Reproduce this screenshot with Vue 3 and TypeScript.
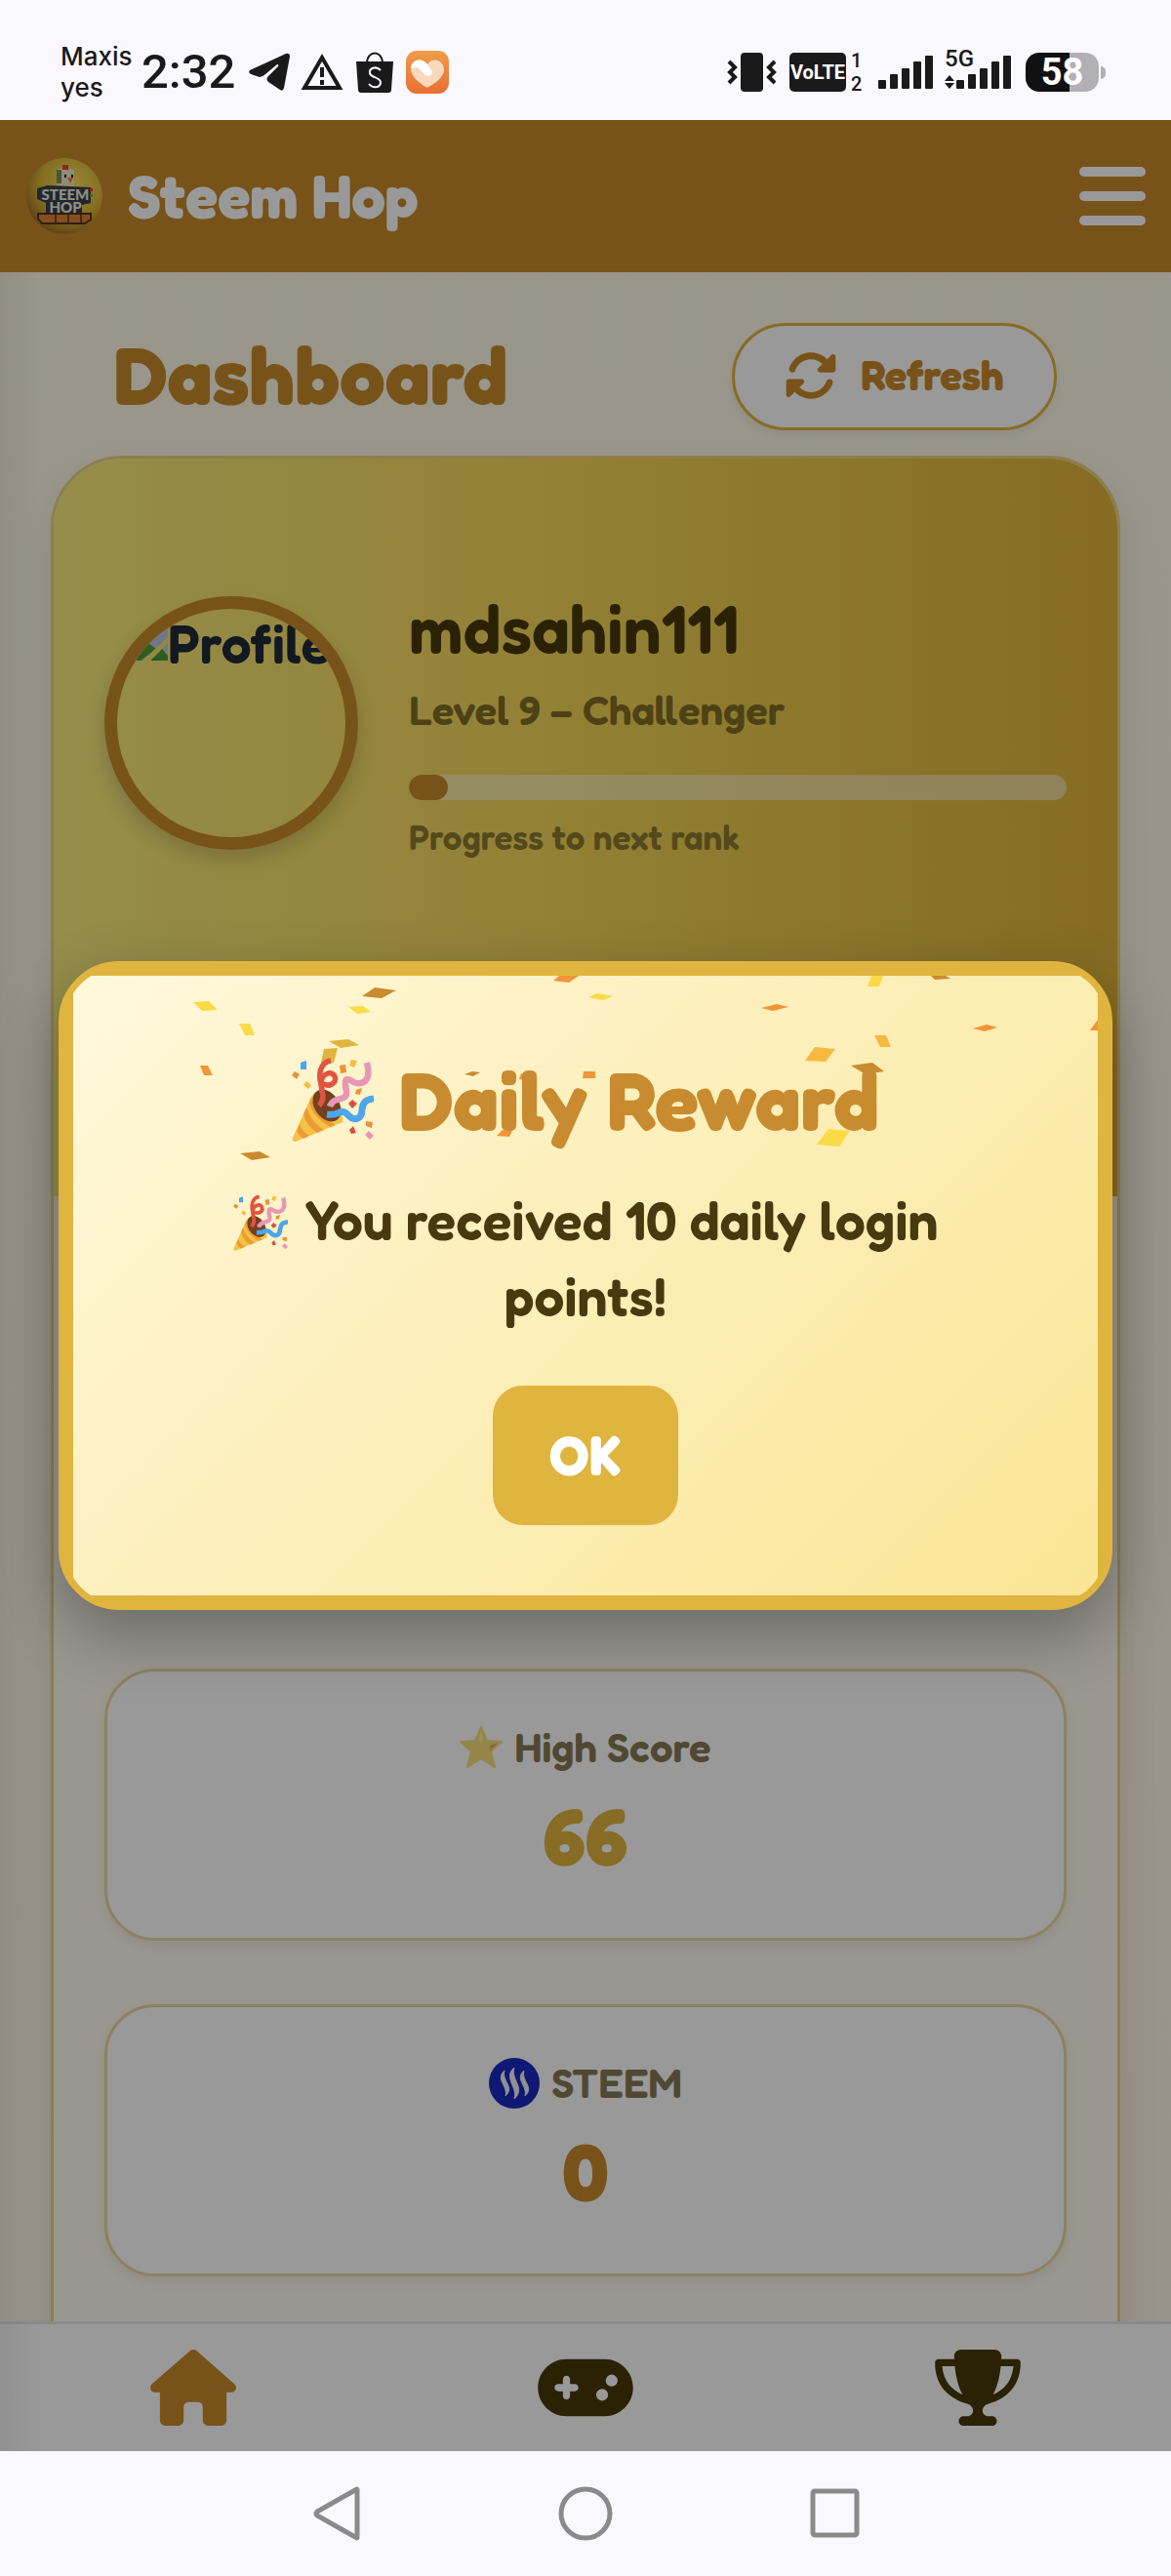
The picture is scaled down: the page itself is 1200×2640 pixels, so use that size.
<script setup lang="ts">
import { ref } from 'vue'

interface Confetto { points: string; fill: string }

const yellow = '#fadb45'
const orange = '#f29537'
const bronze = '#c88b2f'
const gold = '#e0b53f'
const amber = '#f4b93e'

const confetti: Confetto[] = [
  { points: '123,27 139,26 148,35 132,36', fill: yellow },
  { points: '170,49 181,49 186,61 176,61', fill: yellow },
  { points: '296,21 309,12 331,15 316,23', fill: bronze },
  { points: '282,32 297,31 305,37 291,39', fill: yellow },
  { points: '262,67 282,65 293,71 274,74', fill: gold },
  { points: '257,75 271,74 267,89 254,89', fill: gold },
  { points: '130,92 138,92 143,102 134,102', fill: orange },
  { points: '171,182 191,180 202,186 183,189', fill: bronze },
  { points: '401,101 409,98 417,99 410,103', fill: bronze },
  { points: '492,5 498,0 518,0 508,7', fill: orange },
  { points: '528,22 537,18 553,21 543,25', fill: yellow },
  { points: '523,98 535,98 535,105 522,105', fill: orange },
  { points: '434,164 440,158 450,159 447,165', fill: orange },
  { points: '459,100 466,101 464,107 457,106', fill: orange },
  { points: '818,0 830,0 826,11 814,11', fill: yellow },
  { points: '879,0 894,0 899,3 883,4', fill: bronze },
  { points: '705,33 721,29 733,32 717,36', fill: orange },
  { points: '922,54 936,50 947,53 934,57', fill: orange },
  { points: '1042,56 1050,45 1050,56', fill: orange },
  { points: '760,73 781,75 771,88 750,87', fill: amber },
  { points: '821,61 833,61 838,73 827,73', fill: amber },
  { points: '797,92 819,89 831,98 812,101', fill: bronze },
  { points: '774,157 796,159 785,175 762,173', fill: yellow },
]

const bars = [9, 15, 21, 28, 34]
const progress = ref(6)
const rewardOpen = ref(true)
</script>

<template>
  <div class="screen">
    <svg class="defs" aria-hidden="true">
      <symbol id="popper" viewBox="0 0 84 86">
        <path d="M20 40C24 34 29 33 34 34C46 40 53 52 52 66L4 86Q0 86 1 82Z" fill="#f5c344" />
        <path d="M15 51Q20 66 33 74L26 77Q15 70 12 58ZM8 68Q11 76 18 80L12 83Q7 80 5 75ZM20 40Q24 58 45 69L40 71Q22 62 18 46Z" fill="#ee9a36" />
        <ellipse cx="36" cy="49" rx="12.500" ry="18" transform="rotate(-35 36 49)" fill="#74401f" />
        <path d="M28 49Q34 43 31 34L30 25" fill="none" stroke="#b23a2c" stroke-width="5" />
        <path d="M28 49Q34 43 31 34L30 27C27 17 29 5 40 3M31 26C38 31 47 26 44 19C41 13 32 16 30 24" fill="none" stroke="#e05440" stroke-width="5.500" />
        <path d="M39 50C43 38 58 46 56 34C54 25 54 20 60 23C68 29 83 28 77 5" fill="none" stroke="#e797b5" stroke-width="6.500" />
        <path d="M36 58C50 60 49 51 57 58C64 66 72 63 72 53C73 46 75 43 84 42" fill="none" stroke="#4ba6ea" stroke-width="7" />
        <path d="M9 5L15 3L15 12L9 12Z" fill="#4ba6ea" />
        <path d="M3 14L8 17L5 22L0 18ZM49 8L55 7L56 15L50 16ZM66 33L72 31L70 38L65 37ZM76 65L83 66L82 72L76 70Z" fill="#e79337" />
        <path d="M15 24L20 28L17 32L12 28ZM61 2L67 3L64 10L59 8Z" fill="#f0c040" />
        <path d="M62 43L67 47L62 52L58 47ZM63 70L66 77L61 78L59 74Z" fill="#d94f43" />
        <path d="M79 75L84 80L80 84L75 79Z" fill="#e797b5" />
      </symbol>
    </svg>

    <div class="status">
      <div class="status-left">
        <div class="carrier">Maxis<br />yes</div>
        <div class="clock">2:32</div>
        <svg width="44" height="40" viewBox="0 0 44 40"><path d="M2 18Q0 20 3 22L12 25Q15 25 18 22L30 12Q32 12 31 14L21 24Q18 27 21 30L33 38Q36 40 37 36L43 4Q43 0 39 1Z" fill="#1a1a1a" /></svg>
        <svg width="44" height="40" viewBox="0 0 44 40"><path d="M22 5L40 36H4Z" fill="none" stroke="#1a1a1a" stroke-width="4" /><path d="M22 15V25M22 28V33" stroke="#1a1a1a" stroke-width="4" /></svg>
        <svg class="bag" width="38" height="42" viewBox="0 0 38 42"><path d="M11 12C11 -2 27 -2 27 12" fill="none" stroke="#1a1a1a" stroke-width="2" /><path d="M0 10H38L36 39Q36 42 33 42H5Q2 42 2 39Z" fill="#1a1a1a" /><path d="M25 19C20 14 13 17 14 22C15 27 26 26 25 32C24 38 16 37 13 33" fill="none" stroke="#faf8ff" stroke-width="2" /></svg>
        <svg class="heart" width="44" height="44" viewBox="0 0 44 44"><defs><linearGradient id="ho" x2="0" y2="1"><stop stop-color="#f09c49" /><stop offset="1" stop-color="#e86f32" /></linearGradient></defs><rect width="44" height="44" rx="11" fill="url(#ho)" /><path d="M22 14C27 6 39 9 39 20C38 28 29 34 23 37Q22 38 20 37C14 33 5 27 5 18C6 8 17 7 22 14Z" fill="#f9d9bd" /><path d="M5 18C6 8 17 7 22 14L27 21Q26 28 20 25L12 17Z" fill="#fff" /></svg>
      </div>
      <div class="status-right">
        <svg width="51" height="40" viewBox="0 0 51 40"><rect x="14" y="0" width="23" height="40" rx="4" fill="#1a1a1a" /><path d="M2 9L8 15L3 20L8 25L2 31M49 9L43 15L48 20L43 25L49 31" fill="none" stroke="#1a1a1a" stroke-width="4" /></svg>
        <div class="volte">VoLTE</div>
        <div class="sims"><span>1</span><span>2</span></div>
        <div class="bars"><i v-for="h in bars" :key="h" :style="{ height: h + 'px' }"></i></div>
        <div class="data">
          <span class="five">5G</span>
          <svg class="arrows" width="10" height="14" viewBox="0 0 10 14"><path d="M5 0L10 6H0ZM0 8H10L5 14Z" fill="#1a1a1a" /></svg>
          <div class="bars"><i v-for="h in bars" :key="h" :style="{ height: h + 'px' }"></i></div>
        </div>
        <div class="battery"><span>58</span></div>
      </div>
    </div>

    <div class="app">
      <header class="topbar">
        <svg width="78" height="78" viewBox="0 0 78 78">
          <defs>
            <radialGradient id="lg" cx=".6" cy=".35" r=".7"><stop stop-color="#ffe45c" /><stop offset=".6" stop-color="#dcb83a" /><stop offset="1" stop-color="#a06a25" /></radialGradient>
          </defs>
          <circle cx="39" cy="39" r="39" fill="url(#lg)" />
          <path d="M11 31L22 28L66 30V46L57 48V60H20V46L11 42Z" fill="#39424a" />
          <rect x="31" y="11" width="18" height="17" rx="2" fill="#f1e8c8" /><path d="M31 12H36V26H31Z" fill="#6f9257" />
          <path d="M37 7H43V12H37Z" fill="#d9482f" /><path d="M42 20H48L45 26Z" fill="#ee8429" />
          <path d="M39 17h2v3h-2zM46 17h2v3h-2z" fill="#222" />
          <path d="M12 57H66V63L60 67H16L12 62Z" fill="#dd8438" stroke="#5a3215" stroke-width="2" /><path d="M30 58V66M43 58V66M56 58V66" stroke="#7b431b" stroke-width="2" />
          <text x="40" y="43" text-anchor="middle" class="logo-text">STEEM</text>
          <text x="40" y="56" text-anchor="middle" class="logo-text">HOP</text>
          <path d="M65 31h3v3h-3z" fill="#d33" /><path d="M65 37h3v3h-3z" fill="#5a3" />
        </svg>
        <span class="brand">Steem Hop</span>
        <button class="menu" aria-label="Menu"><i></i><i></i><i></i></button>
      </header>

      <main class="content">
        <div class="heading">
          <h1>Dashboard</h1>
          <button class="refresh">
            <svg width="54" height="54" viewBox="0 0 512 512" fill="currentColor"><path d="M142.900 142.900c62.200-62.200 162.700-62.500 225.300-1L327 183c-6.900 6.900-8.900 17.200-5.200 26.200s12.500 14.800 22.200 14.800H472c13.300 0 24-10.700 24-24V72c0-9.700-5.800-18.500-14.800-22.200s-19.300-1.700-26.200 5.200L413.400 96.600c-87.600-86.500-228.700-86.200-315.800 1C73.200 122 55.600 150.700 44.800 181.400c-5.900 16.700 2.900 34.900 19.500 40.800s34.900-2.900 40.800-19.500c7.700-21.800 20.200-42.300 37.800-59.800zM16 312V440c0 9.700 5.800 18.500 14.800 22.200s19.300 1.700 26.200-5.200l41.600-41.600c87.600 86.500 228.700 86.200 315.800-1c24.400-24.400 42.100-53.100 52.900-83.700c5.900-16.700-2.900-34.900-19.500-40.800s-34.900 2.900-40.800 19.500c-7.700 21.800-20.200 42.300-37.800 59.800c-62.200 62.200-162.700 62.500-225.300 1L185 329c6.900-6.900 8.900-17.200 5.200-26.200s-12.500-14.800-22.200-14.800H40c-13.300 0-24 10.700-24 24z" /></svg>
            Refresh
          </button>
        </div>

        <section class="card">
          <div class="hero">
            <div class="avatar" role="img" aria-label="Profile">
              <svg width="32" height="32" viewBox="0 0 32 32"><path d="M0 0H32V32H0Z" fill="#b9c8e4" /><path d="M0 28L12 14L20 20L4 32H0Z" fill="#4c9a35" /><path d="M14 32L26 20L32 27V32Z" fill="#4c9a35" /><path d="M6 32L32 8V14L14 32Z" fill="#f6e577" /></svg>
              <span>Profile</span>
            </div>
            <div class="who">
              <div class="name">mdsahin111</div>
              <div class="level">Level 9 – Challenger</div>
              <div class="track" role="progressbar" :aria-valuenow="progress"><div class="fill" :style="{ width: progress + '%' }"></div></div>
              <div class="hint">Progress to next rank</div>
            </div>
          </div>
          <div class="stats">
            <article class="stat">
              <div class="label">
                <svg width="44" height="44" viewBox="0 0 44 44"><path d="M22 1L28 15L43 16L32 26L36 42L22 33L8 42L12 26L1 16L16 15Z" fill="#f7e07a" stroke="#f7e07a" stroke-width="2" stroke-linejoin="round" /><path d="M31 20L40 17L31 25Z" fill="#dfb45c" /><path d="M22 4L24 16L20 15Z" fill="#fff3ac" /></svg>
                High Score
              </div>
              <div class="value">66</div>
            </article>
            <article class="stat">
              <div class="label">
                <svg width="52" height="52" viewBox="0 0 52 52"><circle cx="26" cy="26" r="26" fill="#1a28c0" /><path d="M16 13C6 22 20 29 17 39C27 30 13 24 16 13ZM26 10C14 20 30 30 26 42C38 31 22 22 26 10ZM36 13C26 22 40 29 37 39C47 30 33 24 36 13Z" fill="#f2f2f2" stroke="#f2f2f2" stroke-width="1" /></svg>
                STEEM
              </div>
              <div class="value bronze">0</div>
            </article>
          </div>
        </section>
      </main>

      <nav class="tabs">
        <a href="#home" aria-label="Home" class="active"><svg width="88" height="78" viewBox="0 0 576 512" fill="currentColor"><path d="M575.800 255.500c0 18-15 32.100-32 32.100h-32l.7 160.200V472c0 22.100-17.900 40-40 40H392c-22.100 0-40-17.900-40-40V384c0-17.700-14.300-32-32-32H256c-17.700 0-32 14.300-32 32v88c0 22.100-17.900 40-40 40H104c-22.100 0-40-17.900-40-40V287.600H32c-18 0-32-14-32-32.100c0-9 3-17 10-24L266.400 8c7-7 15-8 22-8s15 2 21 7L564.800 231.500c8 7 12 15 11 24z" /></svg></a>
        <a href="#play" aria-label="Play"><svg width="98" height="78" viewBox="0 0 640 512" fill="currentColor"><path fill-rule="evenodd" d="M192 64C86 64 0 150 0 256S86 448 192 448H448c106 0 192-86 192-192s-86-192-192-192H192zM496 168a40 40 0 1 1 0 80 40 40 0 1 1 0-80zM392 304a40 40 0 1 1 80 0 40 40 0 1 1 -80 0zM168 200c0-13.300 10.700-24 24-24s24 10.700 24 24v32h32c13.300 0 24 10.700 24 24s-10.700 24-24 24H216v32c0 13.300-10.700 24-24 24s-24-10.700-24-24V280H136c-13.300 0-24-10.700-24-24s10.700-24 24-24h32V200z" /></svg></a>
        <a href="#ranks" aria-label="Leaderboard"><svg width="88" height="78" viewBox="0 0 576 512" fill="currentColor"><path fill-rule="evenodd" d="M400 0H176c-26.500 0-48.100 21.800-47.100 48.200c.2 5.300 .4 10.600 .7 15.800H24C10.700 64 0 74.700 0 88c0 92.600 33.500 157 78.500 200.700c44.300 43.100 98.300 64.800 138.100 75.800c23.400 6.500 39.400 26 39.400 45.600c0 20.900-17 37.900-37.900 37.900H192c-17.700 0-32 14.300-32 32s14.300 32 32 32H384c17.700 0 32-14.300 32-32s-14.300-32-32-32H357.900C337 448 320 431 320 410.100c0-19.600 15.900-39.200 39.400-45.600c39.900-11 93.900-32.700 138.200-75.800C542.500 245 576 180.600 576 88c0-13.300-10.700-24-24-24H446.400c.3-5.200 .5-10.400 .7-15.800C448.100 21.800 426.500 0 400 0zM48.900 112h84.400c9.100 90.100 29.200 150.300 51.900 190.600c-24.900-11-50.800-26.500-73.200-48.300c-32-31.100-58-76-63-142.300zM464.100 254.300c-22.400 21.800-48.300 37.300-73.200 48.300c22.700-40.300 42.800-100.500 51.900-190.600h84.400c-5.100 66.300-31.100 111.200-63 142.300z" /></svg></a>
      </nav>

      <div class="drawer-shade"></div>

      <div v-if="rewardOpen" class="overlay">
        <section class="modal" role="dialog" aria-modal="true" aria-labelledby="reward-title">
          <div class="sheet">
            <svg class="confetti" viewBox="0 0 1050 635" preserveAspectRatio="xMidYMin meet" aria-hidden="true">
              <polygon v-for="(c, i) in confetti" :key="i" :points="c.points" :fill="c.fill" />
            </svg>
            <h2 id="reward-title"><svg class="pop-lg"><use href="#popper" /></svg>Daily Reward</h2>
            <p><svg class="pop-sm"><use href="#popper" /></svg>You received 10 daily login points!</p>
            <button class="ok" @click="rewardOpen = false">OK</button>
          </div>
        </section>
      </div>
    </div>

    <div class="system">
      <button aria-label="Back"><svg width="56" height="56" viewBox="0 0 56 56"><path d="M50 4V52Q50 54 48 52L9 30Q7 28 9 26L48 4Q50 2 50 4Z" /></svg></button>
      <button aria-label="Home screen"><svg width="56" height="56" viewBox="0 0 56 56"><circle cx="28" cy="28" r="25" /></svg></button>
      <button aria-label="Recent apps"><svg width="56" height="56" viewBox="0 0 56 56"><rect x="5" y="5" width="45" height="45" rx="2" /></svg></button>
    </div>
  </div>
</template>

<style>
body { margin: 0; }
</style>

<style scoped>
* { box-sizing: border-box; }
.screen { display: flex; flex-direction: column; height: 100vh; overflow: hidden; font-family: Fredoka, Lato, sans-serif; font-weight: 700; }
svg { display: block; flex: none; }
.defs { position: absolute; width: 0; height: 0; }
button { border: 0; padding: 0; background: none; font: inherit; }
h1, h2, p { margin: 0; font-weight: 700; }

.status { flex: none; height: 123px; padding: 24px 67px 0 62px; background: #faf8ff; color: #1a1a1a; display: flex; justify-content: space-between; align-items: center; font-family: Roboto, sans-serif; font-weight: 500; }
.status-left, .status-right { display: flex; align-items: center; }
.carrier { width: 83px; font: 500 26px/32px Inter, sans-serif; }
.clock { width: 109px; font-size: 49px; line-height: 56px; }
.status-left svg { margin-right: 10px; }
.status-left .bag { margin: 0 13px 0 3px; }
.volte { width: 58px; height: 40px; margin-left: 13px; border-radius: 5px; background: #1a1a1a; color: #fff; font: 700 20px/40px Roboto, sans-serif; text-align: center; }
.sims { display: flex; flex-direction: column; width: 33px; padding-left: 5px; font-size: 20px; line-height: 24px; }
.bars { display: flex; align-items: flex-end; gap: 4px; height: 34px; }
.bars i { width: 8px; border-radius: 1px; background: #1a1a1a; }
.data { position: relative; padding-left: 12px; margin-left: 12px; }
.five { position: absolute; left: 0; top: -9px; font-size: 24px; line-height: 24px; }
.arrows { position: absolute; left: 0; bottom: 0; }
.battery { position: relative; width: 75px; height: 40px; margin: 0 7px 0 15px; border-radius: 14px; background: linear-gradient(90deg, #111 60%, #b1b0b5 60%); color: #fff; font-size: 38px; line-height: 40px; font-weight: 700; text-align: center; }
.battery::after { content: ""; position: absolute; right: -7px; top: 14px; width: 5px; height: 13px; border-radius: 0 5px 5px 0; background: #b1b0b5; }

.app { position: relative; flex: 1; min-height: 0; display: flex; flex-direction: column; background: linear-gradient(#fffae8, #fff7e6); }
.topbar { flex: none; height: 156px; padding: 0 26px 0 27px; display: flex; align-items: center; background: #c88a2b; color: #fff; }
.logo-text { font: 900 15px Lato, sans-serif; fill: #f0eee0; }
.brand { flex: 1; padding-left: 26px; font-size: 62px; line-height: 76px; }
.menu { display: flex; flex-direction: column; gap: 15px; width: 68px; }
.menu i { height: 10px; border-radius: 5px; background: #fff; }

.content { flex: 1; min-height: 0; overflow: hidden; padding: 52px 52px 0; display: flex; flex-direction: column; }
.heading { flex: none; display: flex; justify-content: space-between; align-items: center; padding: 0 65px; margin-bottom: 26px; color: #c88a2b; }
h1 { padding-bottom: 4px; font-size: 83px; line-height: 96px; }
.refresh { display: flex; align-items: center; justify-content: center; gap: 24px; width: 333px; height: 110px; padding-bottom: 2px; border: 3px solid #e0b53f; border-radius: 55px; background: #fff; color: inherit; font-size: 42px; line-height: 52px; box-shadow: 0 5px 10px rgba(0, 0, 0, .06); }

.card { flex: none; border: 3px solid #ead281; border-radius: 74px; background: #fffcee; overflow: hidden; box-shadow: 0 20px 40px rgba(0, 0, 0, .1); }
.hero { display: flex; align-items: flex-start; gap: 52px; min-height: 756px; padding: 136px 52px 0; background: linear-gradient(90deg, #f7ec7e, #f7dc63 35%, #f2d657 50%, #dfb33a); }
.avatar { flex: none; display: flex; width: 260px; height: 260px; margin-top: 5px; padding: 8px 0 0 20px; border: 13px solid #c88a2b; border-radius: 50%; overflow: hidden; box-shadow: 0 10px 20px rgba(0, 0, 0, .16); color: #212a36; font-size: 55px; font-weight: 650; line-height: 56px; }
.avatar svg { margin-top: 13px; }
.who { flex: 1; font-weight: 650; color: #48390a; }
.name { font-size: 69px; line-height: 76px; }
.level { margin-top: 18px; font-size: 42px; line-height: 56px; color: #806e23; }
.track { margin-top: 38px; height: 26px; border-radius: 13px; background: rgba(255, 255, 255, .45); overflow: hidden; }
.fill { height: 100%; border-radius: 13px; background: #c88a2b; }
.hint { margin-top: 18px; font-size: 35px; line-height: 40px; color: #8d7a2c; }

.stats { display: grid; gap: 65px; padding: 484px 52px 160px; }
.stat { display: flex; flex-direction: column; align-items: center; gap: 16px; padding: 52px 0 57px; border: 3px solid #ead7a0; border-radius: 52px; background: #fff; box-shadow: 0 5px 12px rgba(0, 0, 0, .08); }
.label { display: flex; align-items: center; gap: 12px; height: 52px; font-size: 42px; font-weight: 650; line-height: 52px; color: #847855; }
.value { font-size: 83px; line-height: 96px; color: #dfb43c; }
.value.bronze { color: #c88a2b; }

.tabs { flex: none; height: 133px; border-top: 3px solid #e5e7eb; background: #fff; display: flex; justify-content: space-around; align-items: center; }
.tabs a { color: #48390a; }
.tabs a.active { color: #c88a2b; }

.drawer-shade { position: absolute; inset: 156px auto 0 0; width: 40px; background: linear-gradient(90deg, rgba(0, 0, 0, .05), transparent); }
.overlay { position: absolute; inset: 0; display: flex; align-items: center; justify-content: center; background: rgba(0, 0, 0, .4); }
.modal { width: calc(100% - 120px); padding: 8px; border: 7px solid #e0b53f; border-radius: 62px; background: #e0b53f; overflow: hidden; box-shadow: 0 25px 65px rgba(0, 0, 0, .3); }
.sheet { position: relative; display: flex; flex-direction: column; align-items: center; padding: 77px 100px 72px; background: linear-gradient(135deg, #fff8db, #fae595); }
.confetti { position: absolute; inset: 0; width: 100%; height: 100%; }
h2 { position: relative; display: flex; align-items: center; gap: 26px; font-size: 84px; line-height: 100px; color: #c88b2f; }
.pop-lg { width: 84px; height: 86px; }
p { position: relative; margin-top: 35px; font-size: 55px; font-weight: 650; line-height: 78px; text-align: center; color: #48390e; }
.pop-sm { display: inline-block; width: 56px; height: 58px; margin-right: 18px; vertical-align: -11px; }
.ok { position: relative; margin-top: 52px; width: 190px; height: 143px; padding-bottom: 4px; border-radius: 31px; background: #e0b53f; color: #fff; font-size: 56px; }

.system { flex: none; height: 128px; background: #faf8ff; display: flex; justify-content: center; align-items: center; gap: 200px; }
.system svg { fill: none; stroke: #8a8a8a; stroke-width: 5; }
</style>
